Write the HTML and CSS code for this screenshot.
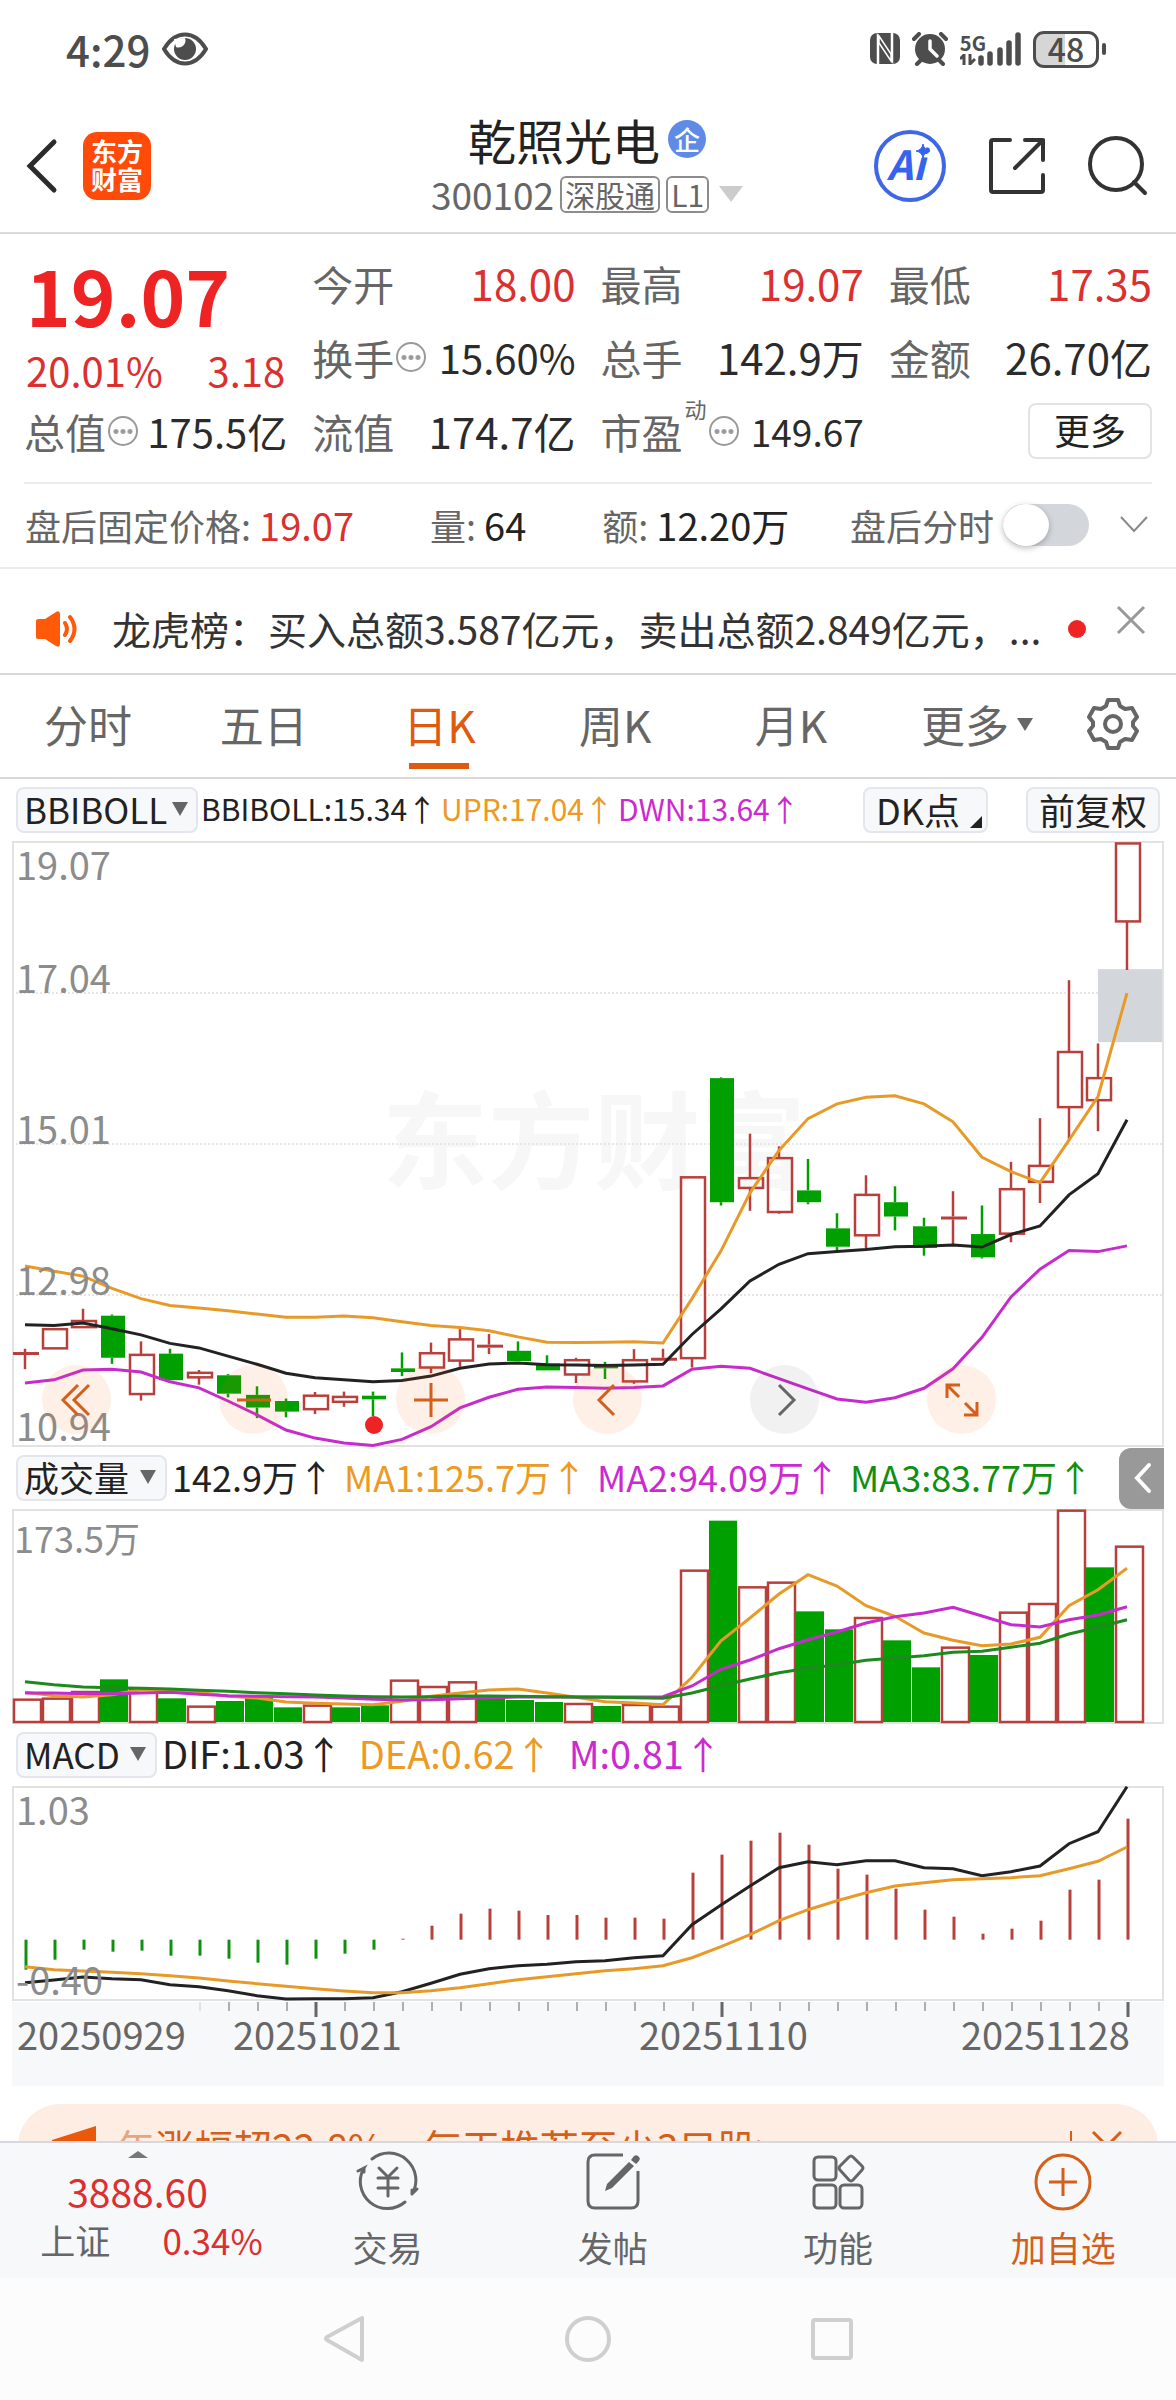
FILE: index.html
```html
<!DOCTYPE html>
<html lang="zh-CN">
<head>
<meta charset="utf-8">
<meta name="viewport" content="width=device-width, initial-scale=1">
<title>乾照光电 300102</title>
<link rel="stylesheet" href="styles.css">
</head>
<body>
<div class="status">
  <span class="clock">4:29</span>
  <svg class="eye" width="46" height="34" viewBox="0 0 46 34"><path d="M2 17C8 7 15 2.500 23 2.500S38 7 44 17C38 27 31 31.500 23 31.500S8 27 2 17Z" fill="none" stroke="#4d4d4d" stroke-width="4"/><circle cx="23" cy="17" r="11" fill="#4d4d4d"/><path d="M23 6a7 7 0 0 1-9 9l-2-8Z" fill="#fff"/></svg>
  <span class="grow"></span>
  <svg width="30" height="32" viewBox="0 0 30 32"><rect width="30" height="31" rx="7" fill="#4d4d4d"/><path d="M8 31V4L22 26M22 0V27L8 5" fill="none" stroke="#fff" stroke-width="2.500"/><path d="M9 10L21 28V21L9 3Z" fill="#4d4d4d" stroke="#fff" stroke-width="1.500"/></svg>
  <svg class="alarm" width="36" height="34" viewBox="0 0 36 34"><circle cx="18" cy="17" r="15" fill="#4d4d4d"/><path d="M2 7L7 2M34 7L29 2M5 32l4-4M31 32l-4-4" stroke="#4d4d4d" stroke-width="4" stroke-linecap="round"/><path d="M18 9V17L25 24" fill="none" stroke="#fff" stroke-width="3.500" stroke-linecap="round"/></svg>
  <span class="net"><span class="net-name">5G</span><svg width="16" height="11" viewBox="0 0 16 11"><path d="M0 5L4 1V11M10 0V10L15 5" fill="none" stroke="#4d4d4d" stroke-width="3"/></svg></span>
  <svg class="bars" width="44" height="34" viewBox="0 0 44 34"><path d="M3 26V31M12 22V31M22 18V31M31 11V31M40 3V31" stroke="#4d4d4d" stroke-width="5.500" stroke-linecap="round"/></svg>
  <span class="battery">48</span><span class="battery-tip"></span>
</div>

<header class="header">
  <div class="brand">
    <button class="icon-btn back" aria-label="返回"><svg width="32" height="56" viewBox="0 0 32 56"><path d="M28 4L4 28L28 52" fill="none" stroke="#2b2b2b" stroke-width="5" stroke-linecap="round"/></svg></button>
    <a class="logo" href="#">东方<br>财富</a>
  </div>
  <div class="title">
    <h1>乾照光电<span class="badge">企</span></h1>
    <div class="code">300102<span class="tag">深股通</span><span class="tag">L1</span><i class="down"></i></div>
  </div>
  <div class="actions">
    <button class="icon-btn" aria-label="Ai"><svg width="72" height="72" viewBox="0 0 72 72"><circle cx="36" cy="36" r="34" fill="none" stroke="#3f66e6" stroke-width="4"/><text x="13" y="50" class="ai">Ai</text><circle cx="46" cy="20" r="6" fill="#fff"/><path d="M49 14Q50 20 56 21Q50 22 49 28Q48 22 42 21Q48 20 49 14Z" fill="#3563f0" stroke="#3563f0"/></svg></button>
    <button class="icon-btn" aria-label="分享"><svg width="58" height="58" viewBox="0 0 58 58"><path d="M22 3H5Q3 3 3 5V53Q3 55 5 55H53Q55 55 55 53V38M37 3H55V23M55 3L27 31" fill="none" stroke="#333" stroke-width="4" stroke-linecap="round" stroke-linejoin="round"/></svg></button>
    <button class="icon-btn" aria-label="搜索"><svg width="60" height="60" viewBox="0 0 60 60"><circle cx="28" cy="28" r="26" fill="none" stroke="#333" stroke-width="4"/><path d="M46 46L57 57" stroke="#333" stroke-width="4" stroke-linecap="round"/></svg></button>
  </div>
</header>

<main>
<section class="stats">
  <div class="price"><strong>19.07</strong><div class="change"><span>20.01%</span><span>3.18</span></div></div>
  <div class="stat"><span>今开</span><b class="up">18.00</b></div>
  <div class="stat"><span>最高</span><b class="up">19.07</b></div>
  <div class="stat"><span>最低</span><b class="up">17.35</b></div>
  <div class="stat"><span>换手<i class="info"></i></span><b class="mid">15.60%</b></div>
  <div class="stat"><span>总手</span><b>142.9万</b></div>
  <div class="stat"><span>金额</span><b>26.70亿</b></div>
  <div class="stat"><span>总值<i class="info"></i></span><b class="mid">175.5亿</b></div>
  <div class="stat"><span>流值</span><b>174.7亿</b></div>
  <div class="stat"><span>市盈<sup>动</sup><i class="info"></i></span><b class="small">149.67</b></div>
  <div class="stat end"><button class="more">更多</button></div>
</section>

<section class="after">
  <span>盘后固定价格: <b class="up">19.07</b></span>
  <span>量: <b>64</b></span>
  <span>额: <b>12.20万</b></span>
  <label class="toggle">盘后分时<input type="checkbox" role="switch"></label>
  <button class="icon-btn" aria-label="展开"><svg width="30" height="20" viewBox="0 0 30 20"><path d="M2 2L15 16L28 2" fill="none" stroke="#8a8a8a" stroke-width="2"/></svg></button>
</section>

<section class="news">
  <svg width="46" height="38" viewBox="0 0 46 38"><path d="M2 11Q2 9 5 9H11L22 2Q26 0 26 4V34Q26 38 22 36L11 29H5Q2 29 2 27Z" fill="#ff5a0a"/><path d="M31 13Q35 19 31 25M36 7Q45 19 36 31" fill="none" stroke="#ff5a0a" stroke-width="4" stroke-linecap="round"/></svg>
  <a href="#">龙虎榜：买入总额3.587亿元，卖出总额2.849亿元，...</a>
  <i class="dot"></i>
  <button class="icon-btn close" aria-label="关闭"><svg width="30" height="30" viewBox="0 0 30 30"><path d="M2 2L28 28M28 2L2 28" stroke="#999" stroke-width="3"/></svg></button>
</section>

<nav class="tabs">
  <button>分时</button><button>五日</button><button class="active">日K</button><button>周K</button><button>月K</button><button class="others">更多<i class="tri"></i></button>
  <button class="gear" aria-label="设置"><svg width="52" height="52" viewBox="0 0 52 52"><path d="M21 2H31L33 8L38 11L45 10L50 19L46 24V28L50 33L45 42L38 41L33 44L31 50H21L19 44L14 41L7 42L2 33L6 28V24L2 19L7 10L14 11L19 8Z" fill="none" stroke="#666" stroke-width="4" stroke-linejoin="round"/><circle cx="26" cy="26" r="8" fill="none" stroke="#666" stroke-width="4"/></svg></button>
</nav>

<div class="bar">
  <label class="pill tight"><select aria-label="主图指标"><option>BBIBOLL</option></select></label>
  <div class="legend small"><span>BBIBOLL:15.34↑</span><span class="c1">UPR:17.04↑</span><span class="c2">DWN:13.64↑</span></div>
  <span class="grow"></span>
  <button class="pill dk">DK点<i class="corner"></i></button>
  <button class="pill">前复权</button>
</div>
<div class="plot">
  <svg id="candles" viewBox="0 0 1152 606"></svg>
  <div class="tools">
    <button aria-label="最早"><svg width="34" height="34" viewBox="0 0 34 34"><path d="M18 2L3 17L18 32M29 2L14 17L29 32"/></svg></button>
    <button aria-label="缩小"><svg width="34" height="34" viewBox="0 0 34 34"><path d="M0 17H34"/></svg></button>
    <button aria-label="放大"><svg width="34" height="34" viewBox="0 0 34 34"><path d="M0 17H34M17 0V34"/></svg></button>
    <button aria-label="左移"><svg width="34" height="34" viewBox="0 0 34 34"><path d="M23 2L8 17L23 32"/></svg></button>
    <button class="off" aria-label="右移"><svg width="34" height="34" viewBox="0 0 34 34"><path d="M11 2L26 17L11 32"/></svg></button>
    <button aria-label="全屏"><svg width="34" height="34" viewBox="0 0 34 34"><path d="M2 15V2H15M2 2L14 14M19 32H32V19M32 32L20 20"/></svg></button>
  </div>
</div>

<div class="bar">
  <label class="pill"><select aria-label="副图指标一"><option>成交量</option></select></label>
  <div class="legend"><span>142.9万↑</span><span class="c1">MA1:125.7万↑</span><span class="c2">MA2:94.09万↑</span><span class="c3">MA3:83.77万↑</span></div>
  <span class="grow"></span>
  <button class="handle" aria-label="收起"><svg width="20" height="34" viewBox="0 0 20 34"><path d="M17 4L5 17L17 30" fill="none" stroke="#fff" stroke-width="4" stroke-linecap="round"/></svg></button>
</div>
<div class="plot"><svg id="volume" viewBox="0 0 1152 215"></svg></div>

<div class="bar">
  <label class="pill"><select aria-label="副图指标二"><option>MACD</option></select></label>
  <div class="legend large"><span>DIF:1.03↑</span><span class="c1">DEA:0.62↑</span><span class="c2">M:0.81↑</span></div>
</div>
<div class="plot"><svg id="macd" viewBox="0 0 1152 216"></svg></div>
<div class="plot axis"><svg id="dates" viewBox="0 0 1152 84"></svg></div>

<aside class="promo">
  <svg width="48" height="40" viewBox="0 0 48 40"><path d="M4 14L48 0V40L4 26Z" fill="#e8590c"/></svg>
  <a href="#"><span class="faded">年</span>涨幅超22.8%，每天推荐至少3只股&gt;</a>
  <span class="grow"></span>
  <button class="icon-btn close-promo" aria-label="关闭"><svg width="30" height="30" viewBox="0 0 30 30"><path d="M1 1L29 29M29 1L1 29" stroke="#d2601a" stroke-width="3"/></svg></button>
</aside>
</main>

<nav class="dock">
  <a class="index" href="#"><i class="caret"></i><span class="up point">3888.60</span><span class="row"><span>上证</span><span class="up">0.34%</span></span></a>
  <a href="#"><svg width="64" height="62" viewBox="0 0 64 62"><g fill="none" stroke="#666" stroke-width="3" stroke-linecap="round"><path d="M16 8A27 27 0 0 1 56 43L61 38M56 43L56 39M49 51A27 27 0 0 1 8 17L2 20M8 17L8 21"/><path d="M23 17L32 26L41 17M22 27H42M22 37H42M32 26V45"/></g></svg>交易</a>
  <a href="#"><svg width="56" height="62" viewBox="0 0 56 62"><path d="M38 4H10Q3 4 3 11V50Q3 57 10 57H46Q53 57 53 50V20" fill="none" stroke="#666" stroke-width="3"/><path d="M20 40L22 33L44 11L49 15L27 37ZM46 9L49 5Q52 3 54 6Q56 8 53 11L51 13Z" fill="#666"/></svg>发帖</a>
  <a href="#"><svg width="54" height="62" viewBox="0 0 54 62"><g fill="none" stroke="#666" stroke-width="3"><rect x="3" y="6" width="22" height="23" rx="4"/><rect x="3" y="34" width="22" height="23" rx="4"/><rect x="29" y="34" width="22" height="23" rx="4"/><path d="M38 6Q40 4 42 6L51 15Q53 17 51 19L42 29Q40 31 38 29L29 19Q27 17 29 15Z"/></g></svg>功能</a>
  <a class="add" href="#"><svg width="58" height="62" viewBox="0 0 58 62"><circle cx="29" cy="31" r="27" fill="none" stroke="#d2601a" stroke-width="3"/><path d="M15 31H43M29 17V45" stroke="#d2601a" stroke-width="3"/></svg>加自选</a>
</nav>
<nav class="system">
  <button class="icon-btn" aria-label="返回"><svg width="44" height="48" viewBox="0 0 44 48"><path d="M40 3V45L5 25Q3 24 5 22Z" fill="none" stroke="#cfcfcf" stroke-width="4" stroke-linejoin="round"/></svg></button>
  <button class="icon-btn" aria-label="主页"><svg width="48" height="48" viewBox="0 0 48 48"><circle cx="24" cy="24" r="21" fill="none" stroke="#cfcfcf" stroke-width="4"/></svg></button>
  <button class="icon-btn" aria-label="多任务"><svg width="44" height="44" viewBox="0 0 44 44"><rect x="3" y="3" width="38" height="38" rx="2" fill="none" stroke="#cfcfcf" stroke-width="4"/></svg></button>
</nav>
<script src="chart.js"></script>
</body>
</html>
```
FILE: styles.css
```css
* { box-sizing: border-box; }
html, body { height: 100%; }
body {
  margin: 0;
  display: flex;
  flex-direction: column;
  min-width: 900px;
  background: #fff;
  color: #222;
  font: 400 36px/44px "Noto Sans CJK SC", "Noto Sans", sans-serif;
}
button, select, input { font: inherit; color: inherit; }
button { padding: 0; border: 0; background: none; cursor: pointer; white-space: nowrap; }
a { color: inherit; text-decoration: none; }
i { font-style: normal; flex: none; }
b { font-weight: 400; }
svg { display: block; flex: none; }
.up { color: #dc2f2f; }
.grow { flex: 1; }

/* system status bar */
.status { flex: none; display: flex; align-items: center; height: 84px; padding: 14px 70px 0 66px; color: #4d4d4d; }
.clock { font-size: 42px; font-weight: 500; }
.eye { margin-left: 12px; }
.alarm { margin-left: 12px; }
.net { display: flex; flex-direction: column; margin-left: 12px; height: 34px; }
.net-name { font-size: 20px; line-height: 22px; font-weight: 700; }
.bars { margin-left: -8px; }
.battery {
  width: 66px; height: 37px; margin-left: 11px; border: 3px solid #4d4d4d; border-radius: 11px;
  background: linear-gradient(90deg, #d6d6d6 48%, #fff 48%);
  font-size: 32px; font-weight: 500; line-height: 29px; text-align: center;
}
.battery-tip { width: 4px; height: 12px; margin-left: 3px; border-radius: 2px; background: #4d4d4d; }

/* stock header */
.header { flex: none; display: grid; grid-template-columns: 1fr auto 1fr; align-items: center; height: 150px; padding: 16px 28px 0 26px; border-bottom: 2px solid #d9d9d9; }
.brand { display: flex; align-items: center; }
.logo { width: 68px; height: 68px; margin-left: 25px; border-radius: 14px; padding-top: 5px; background: #ff4a0a; color: #fff; font-size: 26px; line-height: 28px; font-weight: 700; text-align: center; }
h1 { display: flex; justify-content: center; align-items: center; gap: 8px; margin: 0; font-size: 48px; line-height: 66px; font-weight: 400; }
.badge { width: 38px; height: 38px; border-radius: 50%; background: #5f8be6; color: #fff; font-size: 26px; line-height: 38px; font-weight: 500; text-align: center; }
.code { display: flex; justify-content: center; align-items: center; gap: 6px; padding-bottom: 10px; color: #666; font-size: 37px; }
.tag { padding: 0 3px; border: 2px solid #8c8c8c; border-radius: 6px; font-size: 30px; line-height: 33px; }
.down { margin-left: 4px; border: 12px solid transparent; border-top: 16px solid #ccc; border-bottom: 0; }
.actions { display: flex; align-items: center; justify-content: flex-end; gap: 42px; }
.ai { font: italic 700 40px "Noto Sans CJK SC", sans-serif; fill: #3563f0; }

/* quote grid */
.stats { display: grid; grid-template-columns: repeat(4, 1fr); grid-auto-rows: 74px; column-gap: 25px; margin: 0 24px; padding: 12px 0 14px; border-bottom: 2px solid #ededed; }
.price { grid-row: span 2; color: #ee2424; padding: 2px 2px 0; }
.price strong { display: block; font-size: 76px; line-height: 92px; }
.change { display: flex; justify-content: space-between; font-size: 40px; line-height: 60px; color: #dc2f2f; }
.stat { display: flex; align-items: center; justify-content: space-between; font-size: 41px; color: #2b2b2b; white-space: nowrap; }
.stat > span { display: flex; align-items: center; color: #666; }
.stat b { font-size: 42px; }
.stat .up { color: #dc2f2f; }
.stat .mid { font-size: 40px; }
.stat .small { font-size: 37px; }
.stat sup { align-self: flex-start; margin: -12px 0 0 2px; font-size: 22px; line-height: 22px; }
.info { width: 30px; height: 30px; margin-left: 2px; border: 2px solid #999; border-radius: 50%; background: radial-gradient(circle, #999 2px, transparent 3px) center / 7px 7px repeat-x; background-clip: content-box; padding: 0 3px; }
.stat.end { justify-content: flex-end; }
.more { width: 124px; height: 56px; border: 2px solid #e3e3e3; border-radius: 8px; font-size: 36px; line-height: 48px; padding-bottom: 4px; color: #222; }

.after { display: flex; align-items: center; height: 85px; padding: 0 27px 2px 25px; border-bottom: 2px solid #ededed; color: #666; white-space: nowrap; }
.after b { font-size: 38px; }
.after b:not(.up) { color: #222; }
.after span + span { margin-left: 76px; }
.toggle { display: flex; align-items: center; gap: 9px; margin: 0 30px 0 auto; }
.toggle input { appearance: none; display: flex; width: 86px; height: 42px; margin: 0; border-radius: 21px; background: #d3d7dc; }
.toggle input::before { content: ""; width: 46px; height: 42px; border-radius: 50%; background: #fff; box-shadow: 0 2px 6px #0004; }
.toggle input:checked { justify-content: flex-end; background: #e8590c; }

.news { display: flex; align-items: center; height: 106px; padding: 16px 30px 0 34px; border-bottom: 2px solid #d9d9d9; }
.news a { flex: 1; margin-left: 32px; font-size: 39px; line-height: 60px; padding-bottom: 2px; color: #333; white-space: nowrap; overflow: hidden; }
.dot { width: 18px; height: 18px; border-radius: 50%; background: #ee2424; }
.close { align-self: flex-start; margin: 20px 0 0 30px; }

.tabs { display: grid; grid-template-columns: repeat(6, 3fr) 2fr; height: 104px; border-bottom: 2px solid #d9d9d9; color: #666; font-size: 44px; padding-right: 4px; }
.tabs button { display: flex; align-items: center; justify-content: center; padding-bottom: 4px; }
.tabs .active { color: #de5a10; background: linear-gradient(#de5a10, #de5a10) center bottom 8px / 60px 6px no-repeat; }
.tabs .others { padding-left: 20px; }
.tri { margin-left: 8px; border: 8px solid transparent; border-top: 13px solid #666; border-bottom: 0; }

/* indicator rows */
.bar { display: flex; align-items: center; height: 62px; padding: 0 12px 0 16px; white-space: nowrap; }
.pill { display: flex; align-items: center; height: 46px; padding: 0 9px 2px 6px; border: 2px solid #e3e6ec; border-radius: 8px; background: #f7f8fa; font-size: 35px; line-height: 40px; }
.pill select { appearance: none; padding: 0; border: 0; background: none; }
label.pill::after { content: ""; margin-left: 10px; border: 8px solid transparent; border-top: 14px solid #666; border-bottom: 0; }
label.tight { padding-right: 8px; }
label.tight::after { margin-left: 4px; }
button.pill { padding: 0 11px 2px; font-size: 36px; }
button.pill:last-child { margin: 0 4px 0 38px; }
button.dk { padding-right: 4px; }
.corner { align-self: flex-end; margin: 0 0 1px 10px; border-left: 12px solid transparent; border-bottom: 12px solid #222; }
.legend { display: flex; gap: 10px; margin-left: 5px; padding-bottom: 4px; }
.legend.small { gap: 4px; margin-left: 3px; font-size: 30px; }
.legend.large { gap: 16px; font-size: 38px; }
.c1 { color: #ec9a22; }
.c2 { color: #cc2ad0; }
.c3 { color: #109010; }
.handle { display: flex; align-items: center; justify-content: center; width: 45px; height: 61px; border-radius: 12px 0 0 12px; background: #999; }

/* charts */
.plot { position: relative; margin: 0 12px; }
.plot > svg { width: 100%; height: auto; }
.plot text { font-size: 38px; fill: #8c8c8c; }
.plot .unit { font-size: 36px; }
.plot .watermark { font-size: 106px; font-weight: 700; fill: #f7f7f7; }
.axis { background: #f7f8fa; }
.axis text { fill: #666; }
.tools { position: absolute; left: 30px; bottom: 13px; display: flex; gap: 108px; }
.tools button { display: flex; align-items: center; justify-content: center; width: 69px; height: 69px; border-radius: 50%; background: rgba(245, 100, 20, .1); }
.tools path { fill: none; stroke: #d2601a; stroke-width: 3; }
.tools .off { background: rgba(60, 60, 60, .07); }
.tools .off path { stroke: #666; }

main { flex: 1; min-height: 0; overflow: hidden; }
.promo { display: flex; align-items: center; height: 84px; margin: 18px 18px 0; padding: 0 36px 0 30px; border-radius: 46px; background: #fdede3; color: #d2601a; font-size: 39px; white-space: nowrap; }
.promo a { margin-left: 20px; }
.faded { opacity: .5; }
.close-promo { padding-left: 20px; border-left: 2px solid #d2601a; }

/* bottom navigation */
.dock { flex: none; display: grid; grid-template-columns: 275px repeat(4, 1fr); height: 137px; border-top: 2px solid #d5d8de; background: #f7f8fa; color: #666; font-size: 35px; }
.dock > a { display: flex; flex-direction: column; align-items: center; padding-top: 8px; gap: 12px; }
.dock .add { color: #d2601a; }
.dock .index { padding: 8px 0 0; gap: 0; }
.caret { border: 10px solid transparent; border-bottom: 7px solid #777; border-top: 0; }
.point { font-size: 39px; line-height: 46px; margin-top: 10px; }
.index .row { display: flex; gap: 52px; line-height: 52px; padding-left: 28px; }
.system { flex: none; display: flex; align-items: center; justify-content: center; gap: 198px; height: 122px; background: #fcfcfc; }
```
FILE: chart.js
```js
const RED = '#b8403c', GREEN = '#00a000';
const ORANGE = '#e89a28', PURPLE = '#c62ccc', BLACK = '#222', DARK_GREEN = '#1c8a1c';
const STEP = 29, X0 = 13;
const x = i => X0 + i * STEP;

const rect = (l, t, w, h, fill, stroke) =>
  `<rect x="${l}" y="${t}" width="${w}" height="${h}" fill="${fill}"${stroke ? ` stroke="${stroke}" stroke-width="2.500"` : ''}/>`;
const vline = (cx, a, b, color, w = 2.5) =>
  `<path d="M${cx} ${a}V${b}" stroke="${color}" stroke-width="${w}"/>`;
const curve = (values, color, y) =>
  `<polyline fill="none" stroke="${color}" stroke-width="3" points="${values.map((v, i) => `${x(i)},${y(v).toFixed(1)}`).join(' ')}"/>`;
const label = (lx, ly, text, cls = '') => `<text x="${lx}" y="${ly}" class="${cls}">${text}</text>`;
const frame = h => `<rect x="1" y="1" width="1150" height="${h - 2}" fill="none" stroke="#e2e2e2" stroke-width="2"/>`;

/* candles: [direction, high, body top, body bottom, low] */
const candles = [
  ['r',1268,1276,1283,1318],['r',1220,1220,1267,1267],['r',1170,1200,1215,1215],['g',1184,1187,1290,1305],
  ['r',1250,1283,1379,1395],['g',1268,1280,1345,1345],['r',1320,1327,1338,1356],['g',1330,1333,1378,1387],
  ['g',1360,1381,1412,1438],['g',1390,1396,1422,1436],['r',1374,1383,1416,1428],['r',1373,1386,1398,1410],
  ['g',1373,1383,1392,1433],['g',1277,1316,1325,1335],['r',1253,1279,1314,1328],['r',1220,1245,1297,1312],
  ['r',1232,1258,1266,1281],['g',1250,1273,1298,1298],['g',1284,1304,1321,1321],['r',1290,1296,1331,1352],
  ['g',1300,1310,1316,1342],['r',1269,1296,1348,1354],['r',1268,1290,1297,1297],['r',848,848,1291,1314],
  ['g',603,605,909,917],['r',741,850,874,930],['r',772,801,933,937],['g',803,880,909,914],
  ['g',936,973,1018,1030],['r',843,891,990,1025],['g',870,909,944,978],['g',947,968,1021,1040],
  ['r',882,944,951,1014],['g',917,987,1044,1047],['r',810,877,986,1007],['r',703,820,859,911],
  ['r',365,541,676,757],['r',520,605,659,735],['r',30,30,221,340]
];
const upr = [1065,1078,1090,1120,1145,1162,1168,1175,1183,1191,1191,1188,1192,1202,1211,1216,1224,1239,1252,1253,1252,1251,1254,1145,1028,886,782,704,668,652,648,668,712,799,834,861,757,650,397];
const bbi = [1209,1211,1205,1219,1234,1255,1266,1286,1306,1328,1339,1344,1349,1346,1335,1316,1305,1303,1307,1308,1309,1308,1306,1233,1170,1102,1061,1035,1030,1025,1018,1017,1014,1019,988,967,891,839,707];
const dwn = [1352,1344,1320,1318,1325,1349,1364,1396,1430,1467,1487,1499,1505,1490,1459,1413,1387,1367,1362,1363,1365,1363,1359,1318,1311,1316,1341,1366,1391,1399,1388,1365,1317,1240,1141,1073,1027,1030,1016];

const yPrice = v => (v - 24) / 2.45;
let s = label(370, 340, '东方财富', 'watermark');
s += [152, 303, 454].map(y => `<path d="M0 ${y}H1152" stroke="#e6e6e6" stroke-width="2" stroke-dasharray="2 2"/>`).join('');
s += rect(1086, yPrice(338), 65, 73, '#d3d7dc');
s += frame(606);
candles.forEach(([dir, hi, top, bottom, lo], i) => {
  const color = dir === 'r' ? RED : GREEN;
  const [h, t, b, l] = [hi, top, bottom, lo].map(yPrice);
  s += vline(x(i), h, t, color) + vline(x(i), b, l, color);
  if (dir === 'g') s += rect(x(i) - 11, t, 24, b - t, GREEN);
  else if (bottom - top < 9) s += rect(x(i) - 12, t, 26, 3, RED);
  else s += rect(x(i) - 11, t, 24, b - t, 'none', RED);
});
s += `<circle cx="362" cy="584" r="9" fill="#ee2424"/>`;
s += curve(upr, ORANGE, yPrice) + curve(bbi, BLACK, yPrice) + curve(dwn, PURPLE, yPrice);
s += [['19.07', 39], ['17.04', 152], ['15.01', 303], ['12.98', 454], ['10.94', 600]]
  .map(([t, y]) => label(4, y, t)).join('');
document.getElementById('candles').innerHTML = s;

/* volume */
const volume = [802,799,779,744,771,801,823,809,800,828,820,828,822,745,764,750,800,806,812,815,824,818,823,415,268,465,451,540,594,557,627,708,646,671,541,515,235,408,343];
const ma1 = [783,793,797,790,775,776,783,795,800,812,816,818,820,810,795,785,776,773,785,798,811,815,820,738,628,560,488,430,464,523,555,605,627,643,638,618,523,475,411];
const ma2 = [785,785,787,787,785,783,789,793,795,796,797,800,804,806,805,802,799,797,797,797,797,797,796,764,714,686,652,625,602,575,556,545,528,554,580,587,565,551,526];
const ma3 = [751,760,767,769,771,773,777,780,784,787,791,794,796,797,796,794,794,795,796,797,798,799,801,785,763,743,724,711,700,687,680,673,663,660,648,636,608,588,565];
const falling = new Set([3, 5, 7, 8, 9, 11, 12, 16, 17, 18, 20, 24, 27, 28, 30, 31, 33, 37]);
const yVol = v => (v - 233) / 3;
s = frame(215);
volume.forEach((v, i) => {
  const l = i * STEP, t = yVol(v);
  s += falling.has(i) ? rect(l + 1, t, 28, 213 - t, GREEN) : rect(l + 2, t + 1, 27, 212 - t, 'none', RED);
});
s += curve(ma1, ORANGE, yVol) + curve(ma2, PURPLE, yVol) + curve(ma3, DARK_GREEN, yVol);
s += label(2, 44, '173.5万', 'unit');
document.getElementById('volume').innerHTML = s;

/* macd */
const hist = [594,564,534,540,537,552,552,561,573,579,561,546,534,501,462,426,411,417,430,430,438,438,441,303,249,207,183,219,291,309,351,414,435,486,471,447,354,324,141];
const dif = [633,625,616,621,624,639,645,657,672,682,681,681,678,660,635,608,591,582,578,570,567,558,552,459,400,343,288,270,279,267,267,288,291,312,300,283,216,180,45];
const dea = [585,594,598,602,606,612,619,628,636,644,651,658,663,663,657,648,636,624,615,606,597,591,582,558,525,489,447,414,387,363,343,333,324,321,318,312,291,269,226];
const yMacd = v => (v - 43) / 3;
s = frame(215);
hist.forEach((v, i) => { s += vline(x(i) + 1, yMacd(504), yMacd(v), v > 504 ? '#109010' : RED, 3); });
s += curve(dif, BLACK, yMacd) + curve(dea, ORANGE, yMacd);
s += label(4, 39, '1.03') + label(4, 209, '-0.40');
document.getElementById('macd').innerHTML = s;

/* trading-day ticks */
s = '';
for (let i = 6; i <= 38; i++) {
  const major = [10, 24, 38].includes(i);
  s += vline(x(i) + 1, 0, major ? 15 : 9, i === 6 ? '#ccc' : '#666', major ? 3 : 1);
}
s += label(5, 48, '20250929') + label(221, 48, '20251021') + label(627, 48, '20251110') + label(949, 48, '20251128');
document.getElementById('dates').innerHTML = s;
```
